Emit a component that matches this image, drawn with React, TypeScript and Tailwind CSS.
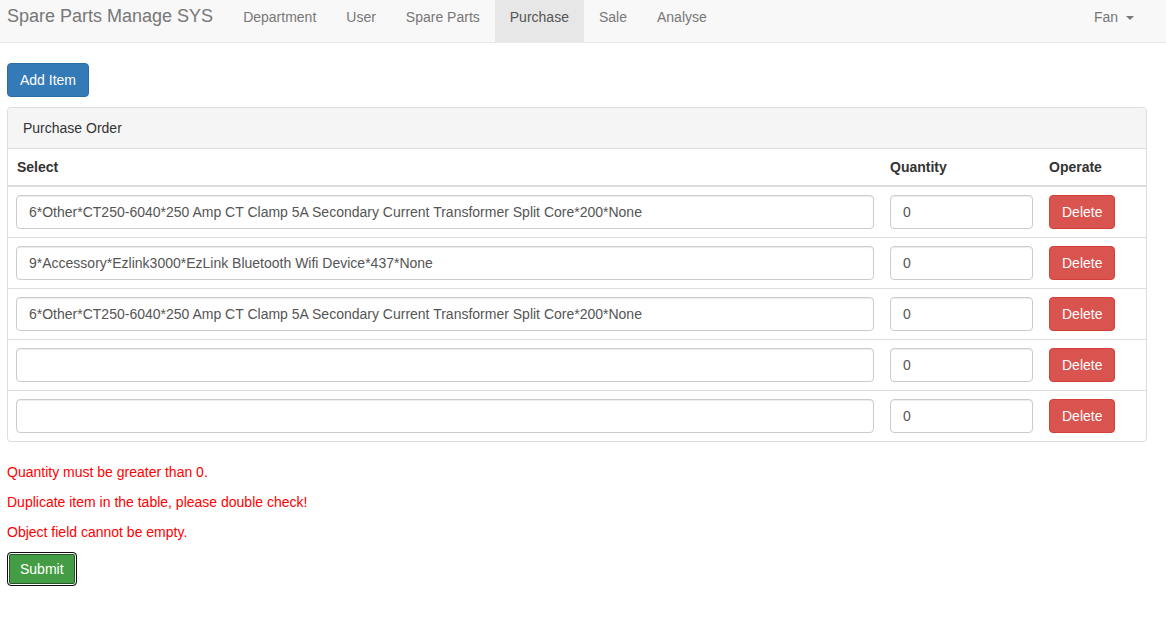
import { useState } from "react";

type Row = { item: string; qty: string };

const initialRows: Row[] = [
  { item: "6*Other*CT250-6040*250 Amp CT Clamp 5A Secondary Current Transformer Split Core*200*None", qty: "0" },
  { item: "9*Accessory*Ezlink3000*EzLink Bluetooth Wifi Device*437*None", qty: "0" },
  { item: "6*Other*CT250-6040*250 Amp CT Clamp 5A Secondary Current Transformer Split Core*200*None", qty: "0" },
  { item: "", qty: "0" },
  { item: "", qty: "0" },
];

const navLinks = ["Department", "User", "Spare Parts", "Purchase", "Sale", "Analyse"];

const inputCls =
  "block w-full h-[34px] px-3 text-[14px] text-[#555] bg-white border border-[#ccc] rounded-[4px] shadow-[inset_0_1px_1px_rgba(0,0,0,0.075)] outline-none";

const App = () => {
  const [rows, setRows] = useState<Row[]>(initialRows);

  const update = (i: number, key: keyof Row, value: string) => {
    setRows(rows.map((r, idx) => (idx === i ? { ...r, [key]: value } : r)));
  };

  return (
    <div className="min-h-screen bg-white text-[14px] leading-[20px] text-[#333] font-['Liberation_Sans',Arial,sans-serif]">
      {/* navbar */}
      <nav className="flex h-[43px] items-start justify-between border-b border-[#e7e7e7] bg-[#f8f8f8] pr-[17px]">
        <div className="flex">
          <span className="h-[42px] pl-[7px] pr-[15px] pt-[6px] text-[18px] leading-[20px] text-[#777]">
            Spare Parts Manage SYS
          </span>
          <ul className="flex">
            {navLinks.map((l) => (
              <li
                key={l}
                className={
                  "h-[42px] px-[15px] pt-[7px] " +
                  (l === "Purchase" ? "bg-[#e7e7e7] text-[#555]" : "text-[#777]")
                }
              >
                {l}
              </li>
            ))}
          </ul>
        </div>
        <div className="flex h-[42px] items-start px-[15px] pt-[7px] text-[#777]">
          Fan
          <span className="ml-[8px] mt-[9px] h-0 w-0 border-x-[4px] border-t-[4px] border-x-transparent border-t-[#777]" />
        </div>
      </nav>

      <div className="pl-[7px] pr-[19px] pt-[20px]">
        <button className="h-[34px] rounded-[4px] border border-[#2e6da4] bg-[#337ab7] px-3 text-[14px] text-white">
          Add Item
        </button>

        {/* panel */}
        <div className="mt-[10px] mb-[20px] rounded-[4px] border border-[#ddd] bg-white">
          <div className="rounded-t-[3px] border-b border-[#ddd] bg-[#f5f5f5] px-[15px] py-[10px]">
            Purchase Order
          </div>
          <table className="w-full border-collapse">
            <thead>
              <tr className="border-b-2 border-[#ddd]">
                <th className="w-[874px] py-2 pl-[9px] pr-2 text-left font-bold">Select</th>
                <th className="w-[159px] p-2 text-left font-bold">Quantity</th>
                <th className="p-2 text-left font-bold">Operate</th>
              </tr>
            </thead>
            <tbody>
              {rows.map((r, i) => (
                <tr key={i} className={i > 0 ? "border-t border-[#ddd]" : ""}>
                  <td className="p-2">
                    <input
                      className={inputCls}
                      value={r.item}
                      onChange={(e) => update(i, "item", e.target.value)}
                    />
                  </td>
                  <td className="p-2">
                    <input
                      className={inputCls}
                      value={r.qty}
                      onChange={(e) => update(i, "qty", e.target.value)}
                    />
                  </td>
                  <td className="p-2">
                    <button
                      className="h-[34px] rounded-[4px] border border-[#d43f3a] bg-[#d9534f] px-3 text-[14px] text-white"
                      onClick={() => setRows(rows.filter((_, idx) => idx !== i))}
                    >
                      Delete
                    </button>
                  </td>
                </tr>
              ))}
            </tbody>
          </table>
        </div>

        <p className="mb-[10px] text-[#ff0000]">Quantity must be greater than 0.</p>
        <p className="mb-[10px] text-[#ff0000]">Duplicate item in the table, please double check!</p>
        <p className="mb-[10px] text-[#ff0000]">Object field cannot be empty.</p>

        <button className="h-[34px] rounded-[4px] border border-[#101010] bg-[#449d44] px-3 text-[14px] text-white shadow-[inset_0_0_0_1px_#ffffff,inset_0_0_0_2px_#255625]">
          Submit
        </button>
      </div>
    </div>
  );
};

export default App;
